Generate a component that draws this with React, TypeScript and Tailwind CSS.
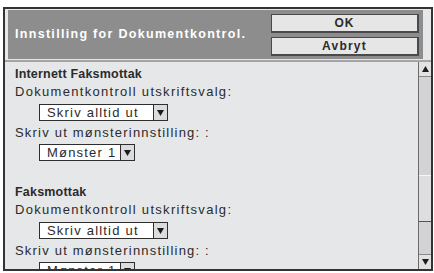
const FONT = "font-['Liberation_Sans','DejaVu_Sans',sans-serif]"

function Dropdown({ value, width }: { value: string; width: string }) {
  return (
    <div className={`ml-[24px] flex h-[17px] ${width} border border-[#2e2e2e] bg-white`}>
      <div className="flex-1 whitespace-nowrap pl-[7px] text-[13px] leading-[15px] tracking-[1.2px] text-[#2b2b2b]">{value}</div>
      <div className="flex w-[14px] items-center justify-center border-l border-[#2e2e2e] bg-[#dcdcdc]">
        <svg width="7" height="6" viewBox="0 0 7 6">
          <path d="M0 0 H7 L3.5 6 Z" fill="#1c1c1c" />
        </svg>
      </div>
    </div>
  )
}

function Section({ title, first }: { title: string; first?: boolean }) {
  return (
    <div className={first ? '' : 'mt-[23px]'}>
      <div className="h-[17px] whitespace-nowrap text-[12.5px] font-bold leading-[17px] tracking-[0.2px] text-[#2b2b2b]">{title}</div>
      <div className="h-[17px] whitespace-nowrap text-[13px] leading-[17px] tracking-[1.3px] text-[#2b2b2b]">Dokumentkontroll utskriftsvalg:</div>
      <div className="mt-[4px]">
        <Dropdown value="Skriv alltid ut" width="w-[129px]" />
      </div>
      <div className="mt-[3px] h-[17px] whitespace-nowrap text-[13px] leading-[17px] tracking-[1.2px] text-[#2b2b2b]">Skriv ut mønsterinnstilling: :</div>
      <div className="mt-[3px]">
        <Dropdown value="Mønster 1" width="w-[96px]" />
      </div>
    </div>
  )
}

export default function App() {
  return (
    <div className={`h-[273px] w-[434px] overflow-hidden bg-white pl-[3px] pt-[7px] ${FONT}`}>
      <div className="flex h-[264px] w-[430px] flex-col border-2 border-[#333] bg-[#e6e7e9]">
        <div className="ml-[3px] mr-[8px] mt-[1px] flex h-[49px] items-center justify-between bg-[#8d8d8d] pl-[7px] pr-[4px]">
          <span className="whitespace-nowrap text-[12.5px] font-bold tracking-[1.3px] text-white">Innstilling for Dokumentkontrol.</span>
          <div className="flex w-[148px] flex-col gap-[4px]">
            <div className="flex h-[19px] items-center justify-center border border-[#4a4a4a] border-b-2 border-r-2 bg-[#e6e6e6] text-[12px] font-bold tracking-[1px] text-[#2b2b2b]">
              OK
            </div>
            <div className="flex h-[19px] items-center justify-center border border-[#4a4a4a] border-b-2 border-r-2 bg-[#e6e6e6] text-[12px] font-bold tracking-[1.2px] text-[#2b2b2b]">
              Avbryt
            </div>
          </div>
        </div>
        <div className="mt-[1px] flex min-h-0 flex-1 border-t-2 border-[#a5a5a5]">
          <div className="min-w-0 flex-1 overflow-hidden pl-[10px] pt-[4px]">
            <Section title="Internett Faksmottak" first />
            <Section title="Faksmottak" />
          </div>
          <div className="flex w-[13px] flex-col border-l border-[#6a6a6a] bg-[#d3d3d5]">
            <div className="flex h-[15px] items-center justify-center border-b border-[#8a8a8a] bg-[#e2e2e2]">
              <svg width="7" height="6" viewBox="0 0 7 6">
                <path d="M0 6 H7 L3.5 0 Z" fill="#1c1c1c" />
              </svg>
            </div>
            <div className="flex flex-1 flex-col">
              <div className="mt-[98px] h-[47px] border-b border-[#555] border-t border-t-[#f6f6f6] bg-[#dedee0]" />
            </div>
            <div className="flex h-[15px] items-center justify-center border-t border-[#8a8a8a] bg-[#e2e2e2]">
              <svg width="7" height="6" viewBox="0 0 7 6">
                <path d="M0 0 H7 L3.5 6 Z" fill="#1c1c1c" />
              </svg>
            </div>
          </div>
        </div>
      </div>
    </div>
  )
}
